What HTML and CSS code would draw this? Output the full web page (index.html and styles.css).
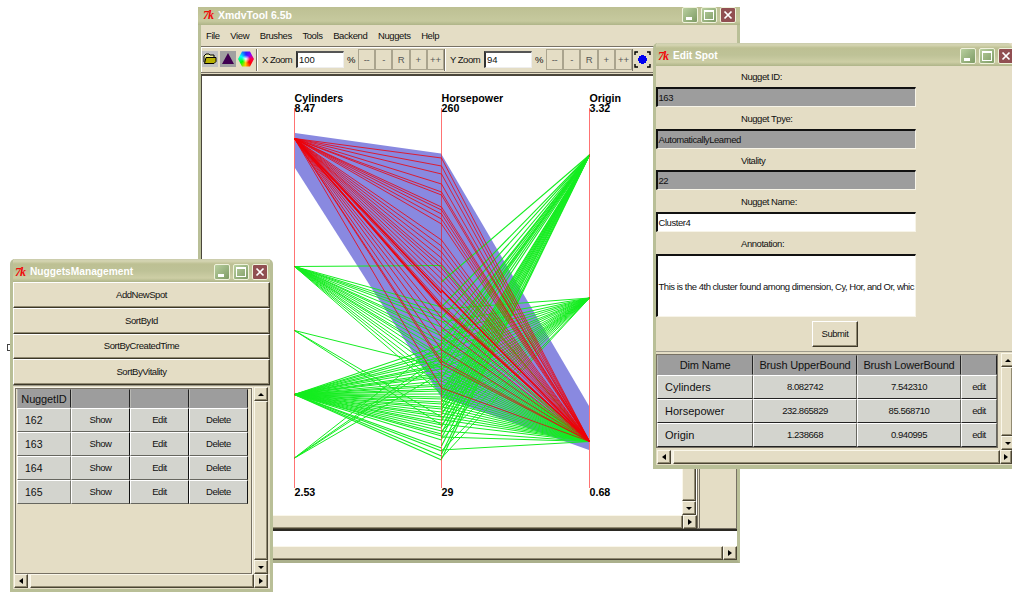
FILE: index.html
```html
<!DOCTYPE html>
<html lang="en">
<head>
<meta charset="utf-8">
<title>XmdvTool 6.5b</title>
<link rel="stylesheet" href="styles.css">
</head>
<body>
<div class="desktop">
<span class="stray"></span>

<section class="win main-win">
  <header class="titlebar"><i class="tk">7k</i><b class="main-title">XmdvTool 6.5b</b>
    <div class="controls"><span class="ctl min"></span><span class="ctl max"></span><span class="ctl close"><svg viewBox="0 0 16 16"><path d="M4 4l8 8M12 4l-8 8"/></svg></span></div></header>
  <nav class="menu"><span>File</span><span>View</span><span>Brushes</span><span>Tools</span><span>Backend</span><span>Nuggets</span><span>Help</span></nav>
  <div class="toolbar">
    <div class="icons">
      <svg viewBox="0 0 16 16"><rect width="16" height="16" fill="#c0c0c0"/><path d="M2 11V5l2-2h3l1 1h4v2" fill="#f0f0a0" stroke="#000"/><path d="M2.500 12.500L4 6.500h10v4l-2 2z" fill="#b8b000" stroke="#000"/></svg>
      <svg viewBox="0 0 16 16"><rect width="16" height="16" fill="#a0a0a0"/><path d="M8 2l6 11H2z" fill="#400050"/></svg>
      <span class="wheel"></span>
    </div>
    <div class="zoom"><span class="zl">X Zoom</span><span class="field">100</span><span class="pct">%</span>
      <div class="zb"><span>--</span><span>-</span><span>R</span><span>+</span><span>++</span></div></div>
    <div class="zoom"><span class="zl yl">Y Zoom</span><span class="field">94</span><span class="pct">%</span>
      <div class="zb"><span>--</span><span>-</span><span>R</span><span>+</span><span>++</span></div></div>
    <svg class="target" viewBox="0 0 17 17"><path d="M1 4V1h3M13 1h3v3M16 13v3h-3M4 16H1v-3" fill="none" stroke="#000" stroke-width="1.400"/><path d="M7 4h3v1h2v2h1v3h-1v2h-2v1H7v-1H5v-2H4V7h1V5h2z" fill="#0000f0"/></svg>
  </div>
  <div class="work">
    <div class="view">
      <div class="view-top">
        <svg class="plot" id="plot" viewBox="202 76 480 439"></svg>
        <div class="vbar"><span class="thumb"></span><span class="arrow down"></span></div>
      </div>
      <div class="hbar"><span class="thumb"></span><span class="arrow right"></span></div>
    </div>
    <div class="side"></div>
  </div>
  <div class="log"></div>
  <div class="hbar last"><span class="thumb"></span><span class="arrow right"></span></div>
</section>

<section class="win edit-win">
  <header class="titlebar"><i class="tk">7k</i><b>Edit Spot</b>
    <div class="controls"><span class="ctl min"></span><span class="ctl max"></span><span class="ctl close"><svg viewBox="0 0 16 16"><path d="M4 4l8 8M12 4l-8 8"/></svg></span></div></header>
  <div class="form">
    <label>Nugget ID:</label><div class="entry off">163</div>
    <label>Nugget Tpye:</label><div class="entry off">AutomaticallyLearned</div>
    <label>Vitality</label><div class="entry off">22</div>
    <label>Nugget Name:</label><div class="entry">Cluster4</div>
    <label>Annotation:</label><div class="entry tall">This is the 4th cluster found among dimension, Cy, Hor, and Or, whic</div>
    <button class="submit">Submit</button>
  </div>
  <div class="pane">
    <div class="pane-top">
      <div class="grid dims">
        <span class="h">Dim Name</span><span class="h">Brush UpperBound</span><span class="h">Brush LowerBound</span><span class="h"></span>
        <span class="n">Cylinders</span><span>8.082742</span><span>7.542310</span><span>edit</span>
        <span class="n">Horsepower</span><span>232.865829</span><span>85.568710</span><span>edit</span>
        <span class="n">Origin</span><span>1.238668</span><span>0.940995</span><span>edit</span>
      </div>
      <div class="vbar"><span class="arrow up"></span><span class="thumb"></span><span class="arrow down"></span></div>
    </div>
    <div class="hbar"><span class="arrow left"></span><span class="thumb"></span><span class="arrow right"></span></div>
  </div>
</section>

<section class="win nug-win">
  <header class="titlebar"><i class="tk">7k</i><b>NuggetsManagement</b>
    <div class="controls"><span class="ctl min"></span><span class="ctl max"></span><span class="ctl close"><svg viewBox="0 0 16 16"><path d="M4 4l8 8M12 4l-8 8"/></svg></span></div></header>
  <div class="stack"><button>AddNewSpot</button><button>SortById</button><button>SortByCreatedTime</button><button>SortByVitality</button></div>
  <div class="pane">
    <div class="pane-top">
      <div class="well"><div class="grid nugs">
        <span class="h">NuggetID</span><span class="h"></span><span class="h"></span><span class="h"></span>
        <span class="n">162</span><span>Show</span><span>Edit</span><span>Delete</span>
        <span class="n">163</span><span>Show</span><span>Edit</span><span>Delete</span>
        <span class="n">164</span><span>Show</span><span>Edit</span><span>Delete</span>
        <span class="n">165</span><span>Show</span><span>Edit</span><span>Delete</span>
      </div></div>
      <div class="vbar"><span class="arrow up"></span><span class="thumb"></span><span class="arrow down"></span></div>
    </div>
    <div class="hbar"><span class="arrow left"></span><span class="thumb"></span><span class="arrow right"></span></div>
  </div>
</section>
</div>
<script src="plot.js"></script>
</body>
</html>
```

FILE: styles.css
```css
* { box-sizing: border-box; }
body { margin: 0; background: #fff; font: 9.5px/12px "Liberation Sans", Arial, sans-serif; letter-spacing: -0.45px; color: #111; }
button { font: inherit; letter-spacing: inherit; color: inherit; padding: 0; margin: 0; }
svg { display: block; }
.desktop { position: relative; width: 1020px; height: 600px; overflow: hidden; }
.stray { position: absolute; left: 7px; top: 344px; width: 4px; height: 7px; border: 1px solid #444; }
.win { position: absolute; display: flex; flex-direction: column; background: #e4ddc5; border: solid #b9bf97; border-width: 0 3px 3px; }
.main-win { left: 198px; top: 7px; width: 542px; height: 556px; border-bottom-color: #abb08c; }
.edit-win { left: 653px; top: 43px; width: 359px; height: 426px; border-right: 0; border-bottom-width: 4px; border-radius: 5px 0 0 0; overflow: hidden; }
.nug-win { left: 10px; top: 259px; width: 263px; height: 333px; border-radius: 5px 5px 0 0; overflow: hidden; }

.titlebar { flex: none; height: 23px; margin: 0 -3px; padding: 2px 5px 0; display: flex; align-items: center; background: linear-gradient(#c9cbab 0, #d5d5b2 2px, #bdc093 5px, #bec297 12px, #cdcea5 19px, #aeb488 23px); color: #fff; border-radius: 5px 5px 0 0; }
.titlebar b { font-size: 10.2px; letter-spacing: 0; padding-top: 1px; }
.edit-win .titlebar { margin-right: 0; padding-right: 0; }
.main-win .titlebar { height: 18px; padding: 0 4px 2px 5px; border-radius: 0; background: linear-gradient(#bdc093, #c6c99e 14px, #aeb488); }
.titlebar .main-title { font-size: 10.5px; padding-top: 0; }
.tk { width: 14px; margin-right: 1px; font: italic bold 12px/12px "Liberation Serif", serif; letter-spacing: -1px; color: #f00808; }
.controls { margin-left: auto; display: flex; gap: 3px; }
.ctl { width: 16px; height: 16px; border: 1px solid #f0f2dc; border-radius: 2px; background: linear-gradient(135deg, #b9cf9f, #7e9b65); position: relative; }
.ctl.close { background: #914f52; }
.ctl svg { width: 14px; height: 14px; stroke: #fff; stroke-width: 2; }
.min::after { content: ""; position: absolute; left: 3px; bottom: 2px; width: 6px; height: 3px; background: #fff; }
.max::after { content: ""; position: absolute; inset: 2px; border: 1px solid #fff; border-top-width: 2px; }
.edit-win .close { margin-right: -2px; }

.menu { flex: none; height: 21px; padding: 5px 0 0 5px; display: flex; }
.menu span { margin-right: 10.6px; letter-spacing: -0.4px; }
.toolbar { flex: none; height: 27px; border: 1px solid #777164; border-right: 0; border-left: 0; display: flex; box-shadow: inset 0 1px #fff, inset 1px 0 #fff; padding: 2px 0 1px 1px; }
.icons { width: 55px; display: flex; gap: 2px; align-items: center; border-right: 1px solid #777164; padding-bottom: 2px; }
.icons svg, .wheel { width: 16px; height: 16px; }
.wheel { background: radial-gradient(#fff 0, transparent 35%), conic-gradient(#22f, #80f, #f04 25%, #f00, #fc0, #0f0 65%, #0ff, #22f); clip-path: polygon(25% 3%, 75% 3%, 100% 50%, 75% 97%, 25% 97%, 0 50%); }
.zoom { width: 188px; display: flex; align-items: center; border-left: 1px solid #fff; border-right: 1px solid #777164; padding: 0 0 1px 4px; }
.zl { width: 34px; letter-spacing: -0.5px; }
.zoom .yl { padding-left: 0; }
.field { width: 48px; height: 17px; border: solid; border-width: 2px 1px 1px 2px; border-color: #555 #eee #eee #333; background: #fff; padding-left: 1px; line-height: 14px; letter-spacing: 0; }
.pct { width: 14px; text-align: center; }
.zb { display: flex; height: 21px; width: 86px; }
.zb span { flex: 1; border: 1px solid; border-color: #fff #57513f #57513f #fff; outline: 1px solid #aaa48e; outline-offset: -1px; text-align: center; line-height: 19px; color: #555; letter-spacing: -0.2px; }
.target { width: 17px; height: 17px; margin: 2px 0 0 1px; }

.work { height: 455px; flex: none; display: flex; border-top: 2px solid #4a463b; margin-top: 1px; border-left: 1px solid #4a463b; }
.view { width: 495px; display: flex; flex-direction: column; background: #fff; }
.view-top { display: flex; height: 439px; }
.plot { width: 480px; height: 439px; flex: none; }
.side { flex: 1; border: 1px solid #777164; border-left: 3px double #777164; }
.log { height: 17px; flex: none; background: #fff; border-top: 2px solid #2b2922; }

.vbar { width: 14px; flex: none; display: flex; flex-direction: column; background: #f3efe2; }
.hbar { height: 14px; flex: none; display: flex; background: #f3efe2; }
.thumb, .arrow { background: #e4ddc5; border: 1px solid; border-color: #faf7ea #4a4433 #4a4433 #faf7ea; box-shadow: inset -1px -1px #918a72; }
.thumb { flex: 1; }
.arrow { width: 14px; height: 14px; flex: none; display: grid; place-items: center; }
.arrow::after { content: ""; border: 3px solid transparent; }
.up::after { border-bottom-color: #000; border-top: 0; }
.down::after { border-top-color: #000; border-bottom: 0; }
.left::after { border-right: 4px solid #000; border-left: 0; }
.right::after { border-left: 4px solid #000; border-right: 0; }
.left + .thumb { margin-left: 2px; }

.form { width: 260px; height: 286px; flex: none; display: flex; flex-direction: column; margin-top: -1px; }
.form label { height: 21.8px; padding: 5px 0 0 85px; flex: none; line-height: 13px; }
.entry { height: 20px; flex: none; border: solid; border-width: 2px 1px 1px 2px; border-color: #111 #f7f4e8 #f7f4e8 #111; background: #fff; line-height: 18px; padding-left: 0.5px; white-space: nowrap; overflow: hidden; }
.off { background: #9d9d9d; }
.tall { height: 63px; line-height: 62px; letter-spacing: -0.48px; }
.submit { width: 46px; height: 26px; flex: none; margin: 4px 0 0 156px; }
.submit, .stack button { background: #e4ddc5; border: 1px solid; border-color: #fff #3c3727 #3c3727 #fff; box-shadow: inset -1px -1px #918a72; }
.stack { flex: none; height: 103px; display: grid; grid-template-rows: repeat(4, 1fr); }

.pane { border-top: 1px solid #9e9b8c; padding: 1px 0 0 1px; }
.pane-top { display: flex; }
.edit-win .pane-top { height: 97px; }
.edit-win .vbar, .edit-win .hbar .right { width: 12px; }
.grid { display: grid; background: #d3d4ce; }
.grid span { border: 1px solid; border-color: #fff #66665f #222 #fff; text-align: center; display: flex; align-items: center; justify-content: center; }
.grid .h { background: #9d9d9d; font-size: 11px; letter-spacing: -0.15px; border-color: #9d9d9d #222 #9d9d9d #b9b9b5; }
.grid .n { font-size: 11px; letter-spacing: 0; justify-content: flex-start; padding-left: 7px; }
.dims { width: 340px; height: 92px; margin: 2px 4px 0 0; grid-template-columns: 96px 104px 104px 36px; grid-template-rows: 20px repeat(3, 24px); outline: 1px solid #777164; }
.nug-win .pane-top { height: 187px; }
.well { width: 237px; height: 186px; margin: 1px 2px 0 1px; border: 1px solid #777164; padding: 0 1px; outline: 1px solid #f7f4e8; }
.nugs { width: 231px; height: 115px; grid-template-columns: 54px 59px 59px 59px; grid-template-rows: 19px repeat(4, 24px); }
.nugs span { border-bottom-color: #66665f; border-right-color: #111; }
.nugs .n { border-right-color: #77776f; font-size: 10.5px; }
.nugs .h { padding: 0; }
.nug-win .hbar { padding-right: 2px; }
```

FILE: plot.js
```javascript
const svg = document.getElementById('plot');
const X = [294.5, 441.5, 589.5];
const GREEN = '#15ed20';
const RED = '#ee0008';

function add(name, attrs, text) {
  const el = document.createElementNS('http://www.w3.org/2000/svg', name);
  for (const key in attrs) el.setAttribute(key, attrs[key]);
  if (text) el.textContent = text;
  svg.appendChild(el);
}
function range(from, to, step) {
  const out = [];
  for (let v = from; v <= to; v += step) out.push(v);
  return out;
}
// Fan of lines between one point on an axis and many on the next.
function fan(xa, ya, xb, ys, color, width) {
  ys.forEach(y => add('path', { d: `M${xa} ${ya}L${xb} ${y}`, stroke: color, fill: 'none', 'stroke-width': width || 1 }));
}

add('path', { d: 'M295 133L441 153.5L589 406V450L441 397L295 168Z', fill: '#8989e0' });

fan(X[0], 266.5, X[1], [265.5, 307, 313, 317, 321, 327, 333, 336, 341, 345, 350, 355, 358, 363, 369, 374, 381, 387, 394], GREEN);
fan(X[0], 330.5, X[1], [367, 417, 425], GREEN);
fan(X[0], 394.5, X[1], [345, 350, 353, 357, 360, 364, 366, 369, 373, 375, 377, 381, 384, 386, 389, 391, 394, 397, 399, 402, 404, 407, 409, 412, 415, 417, 420, 423, 425, 428, 431, 434, 436, 440, 448, 451, 456, 460], GREEN, 1.15);
fan(X[0], 458, X[1], [343, 356, 361, 373], GREEN);

const toJapan = [282, 307, 318, 331, 341, 344, 350, 356, 359, 363, 370, 378, 392, 396, 401, 406, 410, 415, 421, 427, 433, 438, 446, 454, 459];
const toEurope = [309, 322, 331, 338, 344, 351, 358, 363, 369, 376, 382, 387, 393, 398, 402, 407, 412, 418, 424, 431, 439, 451, 458];
fan(X[2], 155, X[1], toJapan, GREEN, 1.15);
fan(X[2], 298, X[1], toEurope, GREEN);
fan(X[2], 441.5, X[1], [265.5, 307, 314, 321, ...range(330, 420, 3.2), 424, 431, 437, 450], GREEN);

const red = [158, 166, 174, 184, 192, 195, 207, 210, 214, 219, 224, 240, 246, 252, 258, 264, 268, 273, 279, 285, 290, 297, 304, 309, 318, 327, 337, 350, 361, 364, 388];
fan(X[0], 138.5, X[1], red, RED, 0.8);
fan(X[0], 138.5, X[1], [293, 307], RED, 1.6);
fan(X[2], 441.5, X[1], red, RED, 0.75);
fan(X[2], 441.5, X[1], [290, 307], RED, 1.5);

X.forEach(x => add('path', { d: `M${x} 108V488`, stroke: '#ff0000', 'stroke-opacity': 0.55 }));

const text = { 'font-size': 10.7, 'font-weight': 'bold', fill: '#000', 'letter-spacing': 0 };
[['Cylinders', '8.47', '2.53'], ['Horsepower', '260', '29'], ['Origin', '3.32', '0.68']].forEach((t, i) => {
  const x = X[i];
  add('text', { ...text, x, y: 102 }, t[0]);
  add('text', { ...text, x, y: 112 }, t[1]);
  add('text', { ...text, x, y: 496 }, t[2]);
});
```
